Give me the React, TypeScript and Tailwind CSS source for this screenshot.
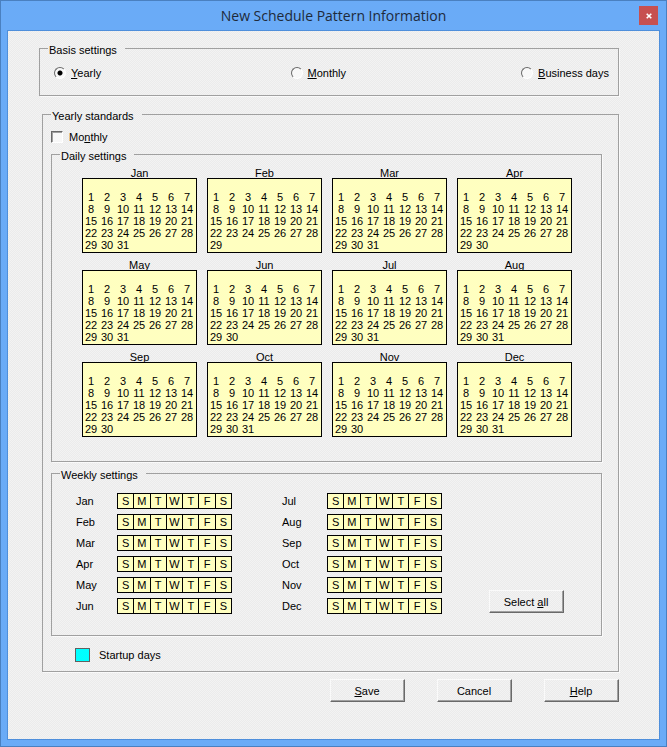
import type { ReactNode } from "react";

const MONTHS: [string, number][] = [
  ["Jan", 31],
  ["Feb", 29],
  ["Mar", 31],
  ["Apr", 30],
  ["May", 31],
  ["Jun", 30],
  ["Jul", 31],
  ["Aug", 31],
  ["Sep", 30],
  ["Oct", 31],
  ["Nov", 30],
  ["Dec", 31],
];

const WEEKDAYS = ["S", "M", "T", "W", "T", "F", "S"];

function Group({ title, className, children }: { title: string; className: string; children: ReactNode }) {
  return (
    <fieldset className={`min-w-0 border border-[#a0a0a0] shadow-[1px_1px_0_#fafafa] ${className}`}>
      <legend className="ml-2 pt-[3px] pr-2 pl-px leading-[14px]">{title}</legend>
      {children}
    </fieldset>
  );
}

function Radio({ id, defaultChecked, children }: { id: string; defaultChecked?: boolean; children: ReactNode }) {
  return (
    <div className="flex h-4 items-center gap-1">
      <input
        type="radio"
        name="basis"
        id={id}
        defaultChecked={defaultChecked}
        className="size-3 appearance-none rounded-full border border-t-[#696969] border-r-white border-b-white border-l-[#696969] bg-[#f8f8f8] checked:bg-[radial-gradient(circle,#000_2px,#f8f8f8_3px)]"
      />
      <label htmlFor={id} className="pl-px whitespace-nowrap">
        {children}
      </label>
    </div>
  );
}

function PushButton({ children }: { children: ReactNode }) {
  return (
    <button
      type="button"
      className="h-[23px] w-[75px] border border-t-[#fafafa] border-r-[#696969] border-b-[#696969] border-l-[#fafafa] pr-px text-center shadow-[inset_-1px_-1px_0_#a0a0a0]"
    >
      {children}
    </button>
  );
}

function MonthCalendar({ name, days }: { name: string; days: number }) {
  return (
    <div>
      <h3 className="h-3 text-center leading-[14px]">{name}</h3>
      <div className="h-[75px] border border-black bg-[#ffffc0] pt-3 pr-px">
        <table aria-label={name} className="w-full table-fixed border-collapse text-center leading-3">
          <tbody>
            {[0, 1, 2, 3, 4].map((week) => (
              <tr key={week}>
                {WEEKDAYS.map((_, i) => {
                  const day = week * 7 + i + 1;
                  return (
                    <td key={i} className="p-0">
                      {day <= days ? day : ""}
                    </td>
                  );
                })}
              </tr>
            ))}
          </tbody>
        </table>
      </div>
    </div>
  );
}

function WeekColumn({ months, labelClass }: { months: [string, number][]; labelClass: string }) {
  return (
    <div className="flex flex-col gap-[6px]">
      {months.map(([name]) => (
        <div key={name} className="flex h-[15px] items-center">
          <span className={labelClass}>{name}</span>
          <table aria-label={name} className="h-[15px] w-[115px] table-fixed border-collapse bg-[#ffffc0] text-center leading-[14px]">
            <tbody>
              <tr>
                {WEEKDAYS.map((d, i) => (
                  <td key={i} className="border border-black p-0">
                    {d}
                  </td>
                ))}
              </tr>
            </tbody>
          </table>
        </div>
      ))}
    </div>
  );
}

export default function App() {
  return (
    <main className="flex min-h-screen flex-col border border-[#4a80c0] bg-[#6aabf7] px-[6px] pb-[6px] font-['Liberation_Sans',Arial,sans-serif] text-[11px] leading-[14px] text-black">
      <header className="grid h-[29px] grid-cols-[1fr_auto_1fr] items-center">
        <h1 className="col-start-2 font-['Open_Sans',sans-serif] text-[14px] leading-5 text-[#1e2a3a]">
          New Schedule Pattern Information
        </h1>
        <button
          type="button"
          aria-label="Close"
          className="mr-[2px] flex size-[19px] items-center justify-center justify-self-end bg-[#c75050]"
        >
          <svg width="6" height="6" viewBox="0 0 6 6" stroke="#fff" strokeWidth="1.6">
            <path d="M0.7 0.7L5.3 5.3M5.3 0.7L0.7 5.3" />
          </svg>
        </button>
      </header>

      <form className="flex-1 border border-[#4f8fdb] bg-[conic-gradient(#f3f3f3_25%,#ebebeb_0_50%,#f3f3f3_0_75%,#ebebeb_0)] bg-[length:2px_2px] pt-[9px] pr-10 pb-9 pl-[31px]">
        <Group title="Basis settings" className="">
          <div className="grid grid-cols-[236fr_230fr_auto] pt-2 pr-[9px] pb-[14px] pl-[14px]">
            <Radio id="yearly" defaultChecked>
              <u>Y</u>early
            </Radio>
            <Radio id="monthly">
              <u>M</u>onthly
            </Radio>
            <Radio id="business">
              <u>B</u>usiness days
            </Radio>
          </div>
        </Group>

        <Group title="Yearly standards" className="mt-[10px] ml-[3px]">
          <div className="pt-[6px] pr-4 pb-2 pl-2">
            <div className="flex h-4 items-center gap-[6px]">
              <input
                type="checkbox"
                id="monthly-standard"
                className="size-3 appearance-none border border-t-[#696969] border-r-white border-b-white border-l-[#696969] bg-[#f8f8f8] shadow-[inset_1px_1px_0_#a0a0a0] checked:bg-[#696969]"
              />
              <label htmlFor="monthly-standard">
                Mo<u>n</u>thly
              </label>
            </div>

            <Group title="Daily settings" className="mt-px">
              <div className="grid grid-cols-4 gap-x-[10px] gap-y-[5px] pt-[3px] pr-[29px] pb-6 pl-[30px]">
                {MONTHS.map(([name, days]) => (
                  <MonthCalendar key={name} name={name} days={days} />
                ))}
              </div>
            </Group>

            <Group title="Weekly settings" className="mt-[3px]">
              <div className="flex items-end pt-[11px] pb-[22px] pl-6">
                <WeekColumn months={MONTHS.slice(0, 6)} labelClass="w-[41px]" />
                <div className="ml-[50px]">
                  <WeekColumn months={MONTHS.slice(6)} labelClass="w-[45px]" />
                </div>
                <div className="ml-[47px]">
                  <PushButton>
                    Select <u>a</u>ll
                  </PushButton>
                </div>
              </div>
            </Group>

            <div className="mt-[11px] flex h-4 items-center gap-[9px] pl-6">
              <span className="h-[14px] w-[15px] border border-[#606060] bg-[#00ffff]" />
              <span>Startup days</span>
            </div>
          </div>
        </Group>

        <div className="mt-[7px] flex justify-end gap-8">
          <PushButton>
            <u>S</u>ave
          </PushButton>
          <PushButton>Cancel</PushButton>
          <PushButton>
            <u>H</u>elp
          </PushButton>
        </div>
      </form>
    </main>
  );
}
